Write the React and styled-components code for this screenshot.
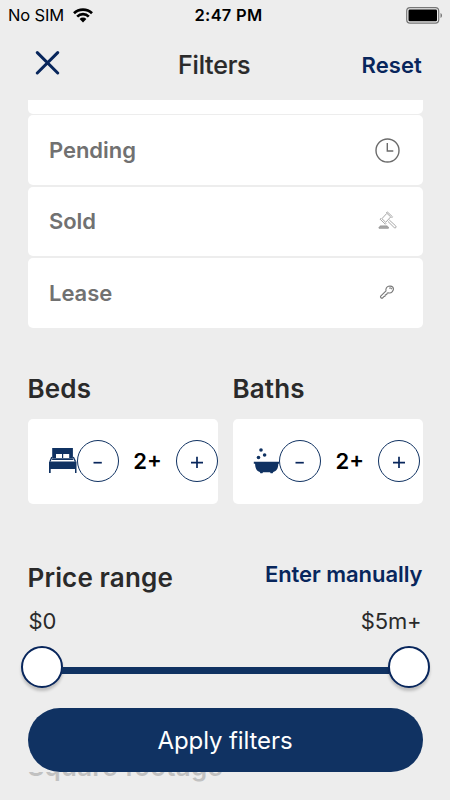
import React from "react";
import styled, { createGlobalStyle } from "styled-components";

const navy = "#103262";
const deepNavy = "#08265c";

const GlobalStyle = createGlobalStyle`
  * { box-sizing: border-box; }
  body { margin: 0; background: #ededed; }
  button { font: inherit; letter-spacing: inherit; color: inherit; background: none; border: 0; padding: 0; }
`;

const Screen = styled.div`
  position: relative;
  display: flex;
  flex-direction: column;
  width: 450px;
  height: 800px;
  overflow: hidden;
  background: #ededed;
  color: #2a2a2a;
  font-family: Inter, "Liberation Sans", sans-serif;
`;

const StatusBar = styled.div`
  display: grid;
  grid-template-columns: 1fr auto 1fr;
  align-items: center;
  height: 30px;
  padding: 0 7px 0 8px;
  color: #000;
`;

const Carrier = styled.div`
  display: flex;
  align-items: center;
  gap: 9px;
  font-size: 16.5px;
  line-height: 30px;
  letter-spacing: -0.15px;
`;

const Time = styled.div`
  font-size: 16.5px;
  line-height: 30px;
  font-weight: 600;
  letter-spacing: 0.25px;
  margin-left: 6px;
`;

const BatteryBox = styled.div`
  display: flex;
  justify-content: flex-end;
`;

const Header = styled.header`
  display: grid;
  grid-template-columns: 143px 1fr auto;
  align-items: center;
  flex: none;
  height: 70px;
  padding: 0 28px 0 35px;
`;

const CloseButton = styled.button`
  display: flex;
  width: 25px;
  height: 25px;
  margin-top: -5px;
`;

const Title = styled.h1`
  margin: 0;
  font-size: 25px;
  line-height: 70px;
  font-weight: 500;
  letter-spacing: -0.2px;
  -webkit-text-stroke: 0.2px currentColor;
`;

const ResetButton = styled.button`
  color: ${deepNavy};
  font-size: 22px;
  line-height: 70px;
  font-weight: 600;
  letter-spacing: 0.1px;
`;

const Content = styled.main`
  flex: 1;
  min-height: 0;
  overflow: hidden;
  padding: 0 27.5px;
`;

const StatusList = styled.div`
  display: flex;
  flex-direction: column;
  gap: 1.6px;
  margin-top: -56px;
`;

const StatusRow = styled.div`
  display: flex;
  align-items: center;
  justify-content: space-between;
  height: 69.7px;
  padding: 0 22.5px 0 21.5px;
  border-radius: 5px;
  background: #fff;
  color: #717171;
  font-size: 22px;
  font-weight: 600;
  letter-spacing: -0.05px;
`;

const Counters = styled.div`
  display: grid;
  grid-template-columns: 190px 190px;
  gap: 15px;
  margin-top: 43.4px;
`;

const SectionTitle = styled.h2`
  margin: 0;
  font-size: 26px;
  line-height: 36px;
  font-weight: 600;
  letter-spacing: 0.15px;
`;

const CounterCard = styled.div`
  display: flex;
  align-items: center;
  height: 85px;
  margin-top: 12px;
  padding-left: ${(p) => p.$inset};
  border-radius: 5px;
  background: #fff;
  svg { flex: none; }
`;

const RoundButton = styled.button`
  flex: none;
  display: flex;
  align-items: center;
  justify-content: center;
  width: 42px;
  height: 42px;
  border: 1.5px solid ${navy};
  border-radius: 50%;
  background: #fff;
`;

const CountValue = styled.div`
  flex: none;
  width: 57px;
  text-align: center;
  color: #000;
  font-size: 22px;
  font-weight: 600;
`;

const PriceHeader = styled.div`
  display: flex;
  justify-content: space-between;
  height: 36px;
  margin-top: 56px;
`;

const ManualLink = styled.button`
  height: 28px;
  color: ${deepNavy};
  font-size: 22px;
  line-height: 28px;
  font-weight: 600;
  letter-spacing: -0.05px;
`;

const RangeLabels = styled.div`
  display: flex;
  justify-content: space-between;
  margin-top: 11px;
  padding: 0 1px;
  font-size: 22px;
  line-height: 28px;
  letter-spacing: -0.15px;
`;

const Slider = styled.div`
  display: flex;
  align-items: center;
  margin: 11px -7px 0;
  height: 43px;
`;

const Knob = styled.div`
  flex: none;
  width: 42px;
  height: 42px;
  border: 2px solid ${deepNavy};
  border-radius: 50%;
  background: #fff;
  box-shadow: 0 3px 3px rgba(0, 0, 0, 0.2);
`;

const Track = styled.div`
  flex: 1;
  height: 7px;
  margin: 7px -1px 0;
  background: ${navy};
`;

const FootageTitle = styled(SectionTitle)`
  margin-top: 60px;
  letter-spacing: 0.2px;
  opacity: 0.22;
`;

const Footer = styled.footer`
  position: absolute;
  left: 0;
  right: 0;
  bottom: 28px;
  display: flex;
  padding: 0 27.5px;
  background: #ededed;
`;

const ApplyButton = styled.button`
  flex: 1;
  height: 64px;
  border-radius: 32px;
  background: ${navy};
  color: #fff;
  font-size: 24px;
  line-height: 66px;
  letter-spacing: -0.1px;
`;

const Wifi = () => (
  <svg width="20" height="15" viewBox="0 0 20 15">
    <g fill="none" stroke="#000" strokeWidth="2.7">
      <path d="M1 5.3a12.8 12.8 0 0 1 18 0" />
      <path d="M4.2 8.6a8.2 8.2 0 0 1 11.6 0" />
    </g>
    <path d="M6.6 11a4.8 4.8 0 0 1 6.8 0L10 14.5z" />
  </svg>
);

const Battery = () => (
  <svg width="37" height="17" viewBox="0 0 37 17">
    <rect x=".7" y=".7" width="32" height="15.4" rx="3.3" fill="none" stroke="#777" strokeWidth="1.2" />
    <rect x="2.5" y="2.6" width="28.5" height="11.6" rx="1.2" />
    <path d="M34.5 6v5c2-.7 2-4.3 0-5z" fill="#777" />
  </svg>
);

const Close = () => (
  <svg width="25" height="25" viewBox="0 0 25 25" stroke={deepNavy} strokeWidth="3" strokeLinecap="round">
    <path d="M2.3 2.6l20.4 20.4M22.7 2.6L2.3 23" />
  </svg>
);

const Clock = () => (
  <svg width="25" height="25" viewBox="0 0 25 25" fill="none" stroke="#6b6b6b" strokeWidth="1.4">
    <circle cx="12.5" cy="12.5" r="11.5" />
    <path d="M12.3 5v8h6" />
  </svg>
);

const Gavel = () => (
  <svg width="25" height="25" viewBox="0 0 25 25" fill="none" stroke="#929292" strokeWidth=".8" strokeLinejoin="round">
    <path d="M6.9 9.7l5-5.4 3.8 3.6-5 5.4zM6 9.2l-.9 1 5.2 5 .9-1M11.3 4l1-1.1 5.2 4.9-1 1.1" />
    <path d="M12.9 12.4l6.3 6.2c1.2 1 2.7-.4 1.5-1.7l-6.5-6" />
    <path d="M5.2 18v-1.1h7V18M4 19.3V18h9.4v1.3z" fill="#bbb" />
  </svg>
);

const Key = () => (
  <svg width="25" height="25" viewBox="0 0 25 25" fill="none" stroke="#777" strokeWidth="1.1" strokeLinejoin="round">
    <path d="M11 10.9c-.5-2 .6-4.2 2.5-4.6 1.7-.3 3.4-.2 4.3.9.9 1.2.5 3.4-.7 4.7-1 1.1-2.5 1.3-4 .9l-1 .4-.3 1.3-1.5.4-.4 1.4-1.3.5-.9 1.1c-1.2.7-2.8-.6-2-1.8z" />
    <path d="M14.2 8.3c1-.7 2.4-.2 2.3 1" />
  </svg>
);

const Bed = () => (
  <svg width="28" height="26" viewBox="0 0 28 26" fill={navy}>
    <path fillRule="evenodd" d="M3.2 0h20.7v10.5H3.2zM7 6v4h6V6zM14.2 6v4h6V6z" />
    <path d="M2.8 9L1 13.6M24.3 9l2.2 4.6" stroke={navy} strokeWidth="1.3" />
    <path d="M3.6 10.5h20l.9 1.5H2.8z" />
    <path d="M0 13.6h27.5V25H26v-4H1.7v4H0z" />
  </svg>
);

const Bath = () => (
  <svg width="26" height="26" viewBox="0 0 26 26" fill={navy}>
    <circle cx="8" cy="2" r="1.8" />
    <circle cx="11.6" cy="7" r="1.8" />
    <circle cx="5.5" cy="9.5" r="1.8" />
    <path d="M.8 13.8H26v2h-.7c0 4.5-1.7 7.5-5 8.2l-.7 1.3h-2l-.5-1H10l-.6 1h-2L6.8 24c-3-.8-4.7-3.8-4.7-8.2H.8z" />
  </svg>
);

const Sign = ({ plus }) => (
  <svg width="14" height="14" viewBox="0 0 14 14" stroke={deepNavy} strokeWidth="1.7">
    {plus ? <path d="M1 8.7h12M7 2.7v12" /> : <path d="M2.5 8.7h8.3" />}
  </svg>
);

const statuses = [
  { label: "", icon: null },
  { label: "Pending", icon: <Clock /> },
  { label: "Sold", icon: <Gavel /> },
  { label: "Lease", icon: <Key /> },
];

const Counter = ({ title, icon, inset }) => (
  <section>
    <SectionTitle>{title}</SectionTitle>
    <CounterCard $inset={inset}>
      {icon}
      <RoundButton aria-label={`Fewer ${title}`}><Sign /></RoundButton>
      <CountValue>2+</CountValue>
      <RoundButton aria-label={`More ${title}`}><Sign plus /></RoundButton>
    </CounterCard>
  </section>
);

export default function App() {
  return (
    <Screen>
      <GlobalStyle />
      <StatusBar>
        <Carrier>No SIM<Wifi /></Carrier>
        <Time>2:47 PM</Time>
        <BatteryBox><Battery /></BatteryBox>
      </StatusBar>
      <Header>
        <CloseButton aria-label="Close"><Close /></CloseButton>
        <Title>Filters</Title>
        <ResetButton>Reset</ResetButton>
      </Header>
      <Content>
        <StatusList>
          {statuses.map((s, i) => (
            <StatusRow key={i}>{s.label}{s.icon}</StatusRow>
          ))}
        </StatusList>
        <Counters>
          <Counter title="Beds" icon={<Bed />} inset="21.5px" />
          <Counter title="Baths" icon={<Bath />} inset="20.7px" />
        </Counters>
        <PriceHeader>
          <SectionTitle>Price range</SectionTitle>
          <ManualLink>Enter manually</ManualLink>
        </PriceHeader>
        <RangeLabels><span>$0</span><span>$5m+</span></RangeLabels>
        <Slider><Knob /><Track /><Knob /></Slider>
        <FootageTitle>Square footage</FootageTitle>
      </Content>
      <Footer>
        <ApplyButton>Apply filters</ApplyButton>
      </Footer>
    </Screen>
  );
}
